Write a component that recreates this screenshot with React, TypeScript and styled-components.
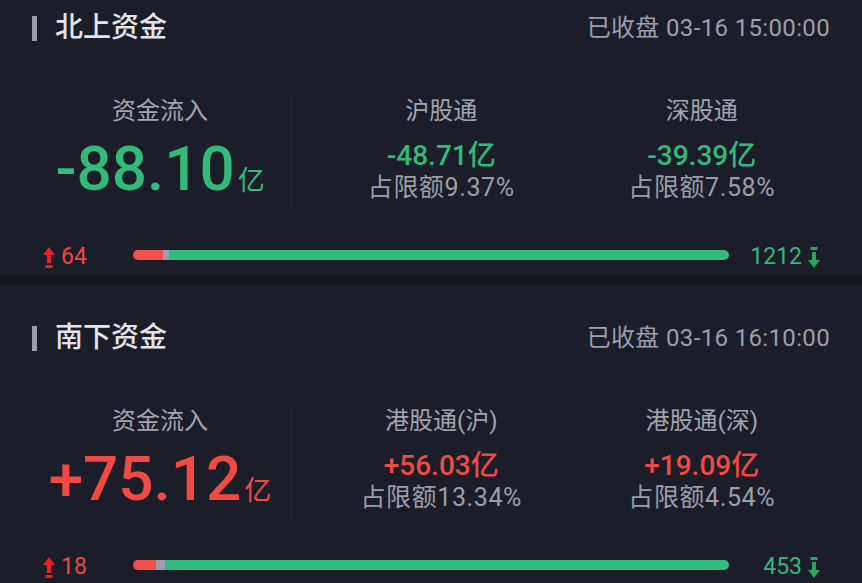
import React from "react";
import styled, { createGlobalStyle } from "styled-components";

const GlobalStyle = createGlobalStyle`
  html, body {
    margin: 0;
    padding: 0;
    background: #15171f;
    overflow: hidden;
  }
  body {
    font-family: "Roboto", "Noto Sans CJK SC", sans-serif;
  }
`;

const FONT = `"Roboto", "Noto Sans CJK SC", sans-serif`;
const GREEN = "#33b97a";
const RED = "#f04a44";

const Page = styled.div`
  width: 862px;
  height: 583px;
  overflow: hidden;
  background: #15171f;
`;

const List = styled.div`
  display: flex;
  flex-direction: column;
  gap: 11px;
  margin-top: -24px;
`;

const Card = styled.section`
  background: #1b1e28;
  display: flex;
  flex-direction: column;
  padding: 33px 0 5px;
  height: 299px;
  box-sizing: border-box;
`;

const Header = styled.div`
  display: flex;
  align-items: center;
  height: 38px;
  padding: 0 32px 0 32px;
`;

const TitleBar = styled.span`
  width: 5px;
  height: 25px;
  background: #9b9dac;
  margin-right: 18px;
`;

const Title = styled.h2`
  margin: 0;
  font-family: ${FONT};
  font-size: 28px;
  font-weight: 500;
  color: #e4e4e9;
  line-height: 38px;
  flex: 1;
`;

const Time = styled.span`
  font-family: ${FONT};
  font-size: 24px;
  letter-spacing: 0.35px;
  color: #9d9fab;
  line-height: 38px;
`;

const Stats = styled.div`
  display: flex;
  height: 114px;
  margin-top: 49px;
  padding: 0 30px;
`;

const MainCol = styled.div`
  width: 260px;
  display: flex;
  flex-direction: column;
  align-items: center;
`;

const Divider = styled.div`
  width: 1px;
  align-self: stretch;
  background: #222532;
`;

const SubCols = styled.div`
  flex: 1;
  display: grid;
  grid-template-columns: 1fr 1fr;
  margin-left: 20px;
`;

const SubCol = styled.div`
  display: flex;
  flex-direction: column;
  align-items: center;
`;

const Label = styled.div`
  font-family: ${FONT};
  font-size: 24px;
  line-height: 28px;
  color: #a2a4af;
  margin-top: 1px;
`;

const BigValue = styled.div<{ $color: string }>`
  font-family: ${FONT};
  font-size: 62px;
  font-weight: 500;
  line-height: 62px;
  height: 62px;
  margin-top: 13px;
  color: ${(p) => p.$color};
  white-space: nowrap;
`;

const Unit = styled.span`
  font-size: 27px;
  font-weight: 400;
  line-height: 1;
  margin-left: 3px;
`;

const Value = styled.div<{ $color: string }>`
  font-family: ${FONT};
  font-size: 28px;
  font-weight: 500;
  line-height: 34px;
  margin-top: 14px;
  color: ${(p) => p.$color};
  white-space: nowrap;
`;

const Quota = styled.div`
  font-family: ${FONT};
  font-size: 25px;
  letter-spacing: 0.6px;
  line-height: 30px;
  color: #9c9eaa;
  white-space: nowrap;
`;

const BarRow = styled.div`
  display: grid;
  grid-template-columns: 90px 1fr 91px;
  align-items: center;
  height: 30px;
  margin-top: 27px;
  padding: 0 42px 0 43px;
`;

const Count = styled.div<{ $color: string; $end?: boolean }>`
  display: flex;
  align-items: center;
  justify-content: ${(p) => (p.$end ? "flex-end" : "flex-start")};
  gap: 6px;
  font-family: ${FONT};
  font-size: 23px;
  line-height: 30px;
  padding-top: 5px;
  color: ${(p) => p.$color};
`;

const Track = styled.div`
  display: flex;
  height: 10px;
  border-radius: 5px;
  overflow: hidden;
`;

const Segment = styled.div<{ $color: string }>`
  height: 100%;
  background: ${(p) => p.$color};
`;

const UpArrow = () => (
  <svg width="12" height="21" viewBox="0 0 12 21">
    <polygon points="6,0 12,8 8,8 8,16 4,16 4,8 0,8" fill="#e8202c" />
    <rect x="2.5" y="18" width="7" height="3" fill="#e8202c" />
  </svg>
);

const DownArrow = () => (
  <svg width="12" height="21" viewBox="0 0 12 21">
    <rect x="2.5" y="0" width="7" height="3" fill="#22a660" />
    <polygon points="4,5 8,5 8,13 12,13 6,21 0,13 4,13" fill="#22a660" />
  </svg>
);

type Sub = { name: string; value: string; quota: string };
type CardData = {
  title: string;
  time: string;
  total: string;
  color: string;
  subs: Sub[];
  up: number;
  down: number;
  bar: [number, number, number];
};

const cards: CardData[] = [
  {
    title: "北上资金",
    time: "已收盘 03-16 15:00:00",
    total: "-88.10",
    color: GREEN,
    subs: [
      { name: "沪股通", value: "-48.71亿", quota: "占限额9.37%" },
      { name: "深股通", value: "-39.39亿", quota: "占限额7.58%" },
    ],
    up: 64,
    down: 1212,
    bar: [30, 6, 560],
  },
  {
    title: "南下资金",
    time: "已收盘 03-16 16:10:00",
    total: "+75.12",
    color: RED,
    subs: [
      { name: "港股通(沪)", value: "+56.03亿", quota: "占限额13.34%" },
      { name: "港股通(深)", value: "+19.09亿", quota: "占限额4.54%" },
    ],
    up: 18,
    down: 453,
    bar: [23, 9, 564],
  },
];

const FlowCard = ({ c }: { c: CardData }) => {
  const sum = c.bar[0] + c.bar[1] + c.bar[2];
  return (
    <Card>
      <Header>
        <TitleBar />
        <Title>{c.title}</Title>
        <Time>{c.time}</Time>
      </Header>
      <Stats>
        <MainCol>
          <Label>资金流入</Label>
          <BigValue $color={c.color}>
            {c.total}
            <Unit>亿</Unit>
          </BigValue>
        </MainCol>
        <Divider />
        <SubCols>
          {c.subs.map((s) => (
            <SubCol key={s.name}>
              <Label>{s.name}</Label>
              <Value $color={c.color}>{s.value}</Value>
              <Quota>{s.quota}</Quota>
            </SubCol>
          ))}
        </SubCols>
      </Stats>
      <BarRow>
        <Count $color="#ec4842">
          <UpArrow />
          {c.up}
        </Count>
        <Track>
          <Segment $color="#f2504a" style={{ width: `${(c.bar[0] / sum) * 100}%` }} />
          <Segment $color="#9c9eae" style={{ width: `${(c.bar[1] / sum) * 100}%` }} />
          <Segment $color="#35ba7d" style={{ width: `${(c.bar[2] / sum) * 100}%` }} />
        </Track>
        <Count $color="#35b57a" $end>
          {c.down}
          <DownArrow />
        </Count>
      </BarRow>
    </Card>
  );
};

export default function App() {
  return (
    <>
      <GlobalStyle />
      <Page>
        <List>
          {cards.map((c) => (
            <FlowCard key={c.title} c={c} />
          ))}
        </List>
      </Page>
    </>
  );
}
